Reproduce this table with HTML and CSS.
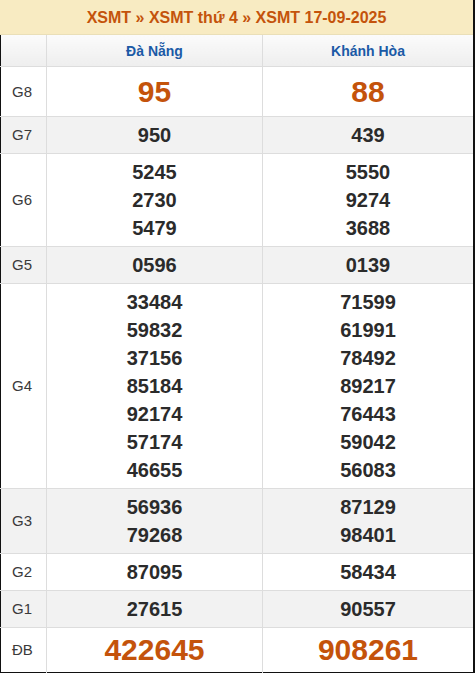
FILE: index.html
```html
<!DOCTYPE html>
<html lang="vi">
<head>
<meta charset="utf-8">
<link rel="stylesheet" href="styles.css">
</head>
<body>
<div class="box">
  <div class="title">XSMT » XSMT thứ 4 » XSMT 17-09-2025</div>
  <table class="kq">
    <colgroup><col class="c-lbl"><col class="c-a"><col class="c-b"></colgroup>
    <thead>
      <tr class="head"><th></th><th>Đà Nẵng</th><th>Khánh Hòa</th></tr>
    </thead>
    <tbody>
      <tr class="big"><td class="lbl">G8</td><td>95</td><td>88</td></tr>
      <tr class="alt"><td class="lbl">G7</td><td>950</td><td>439</td></tr>
      <tr><td class="lbl">G6</td><td>5245<br>2730<br>5479</td><td>5550<br>9274<br>3688</td></tr>
      <tr class="alt"><td class="lbl">G5</td><td>0596</td><td>0139</td></tr>
      <tr><td class="lbl">G4</td><td>33484<br>59832<br>37156<br>85184<br>92174<br>57174<br>46655</td><td>71599<br>61991<br>78492<br>89217<br>76443<br>59042<br>56083</td></tr>
      <tr class="alt"><td class="lbl">G3</td><td>56936<br>79268</td><td>87129<br>98401</td></tr>
      <tr><td class="lbl">G2</td><td>87095</td><td>58434</td></tr>
      <tr class="alt"><td class="lbl">G1</td><td>27615</td><td>90557</td></tr>
      <tr class="big db"><td class="lbl">ĐB</td><td>422645</td><td>908261</td></tr>
    </tbody>
  </table>
</div>
</body>
</html>
```
FILE: styles.css
```css
html, body {
  margin: 0;
  padding: 0;
  background: #ffffff;
}
body {
  font-family: "Liberation Sans", Arial, sans-serif;
  color: #333333;
}
.box {
  width: 475px;
  box-sizing: border-box;
  border-right: 2px solid #111;
}
.title {
  height: 35px;
  line-height: 35px;
  background: #f8ebc2;
  color: #c4530b;
  font-size: 16px;
  font-weight: bold;
  text-align: center;
  border-bottom: 1px solid #eadfb8;
  box-sizing: border-box;
}
.kq {
  width: 100%;
  border-collapse: collapse;
  table-layout: fixed;
  border-left: 1px solid #111;
  border-bottom: 1px solid #111;
}
.c-lbl { width: 46px; }
.c-a { width: 216px; }
.kq th, .kq td {
  border: 1px solid #dddddd;
  padding: 0;
  text-align: center;
}
.kq tr > :first-child { border-left: none; }
.kq tr > :last-child { border-right: none; }
.kq tbody tr:last-child td { border-bottom: none; }
.head th {
  height: 31px;
  background: linear-gradient(#fbfbfb, #eeeeee);
  color: #1b5aa6;
  font-size: 14px;
  font-weight: bold;
  border-top: none;
}
.kq td {
  font-size: 20px;
  font-weight: bold;
  line-height: 28px;
  padding: 4px 0 4px;
  color: #2b2b2b;
}
.kq td.lbl {
  font-size: 15px;
  font-weight: normal;
  text-align: left;
  padding-left: 11px;
  color: #3a3a3a;
}
.alt td { background: #f2f2f2; }
.big td {
  font-size: 30px;
  line-height: 41px;
  color: #c4530b;
}
.db td { line-height: 36px; }
```
